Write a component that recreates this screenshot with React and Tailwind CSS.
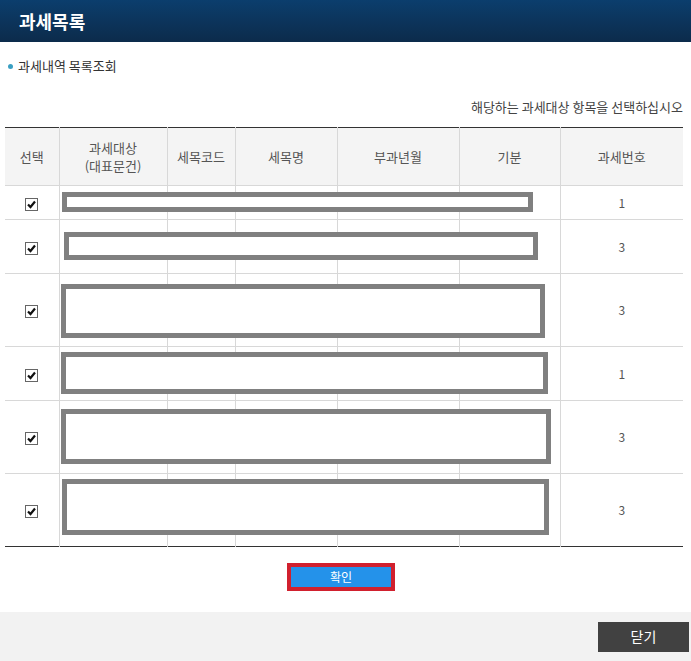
import React from "react";

const font = { fontFamily: '"Noto Sans CJK KR", "Noto Sans", sans-serif' };

const cols = [
  { w: "w-[54px]", label: "선택" },
  { w: "w-[108px]", label: ["과세대상", "(대표문건)"] },
  { w: "w-[68px]", label: "세목코드" },
  { w: "w-[102px]", label: "세목명" },
  { w: "w-[122px]", label: "부과년월" },
  { w: "w-[101px]", label: "기분" },
  { w: "w-[123px]", label: "과세번호" },
];

const rows = [
  { h: "h-[34px]", no: 1 },
  { h: "h-[54px]", no: 3 },
  { h: "h-[73px]", no: 3 },
  { h: "h-[54px]", no: 1 },
  { h: "h-[73px]", no: 3 },
  { h: "h-[73px]", no: 3 },
];

// redaction boxes drawn over the table
const masks = [
  "left-[57px] top-[65px] w-[471px] h-[20px]",
  "left-[59px] top-[105px] w-[474px] h-[28px]",
  "left-[56px] top-[157px] w-[484px] h-[54px]",
  "left-[56px] top-[225px] w-[487px] h-[42px]",
  "left-[56px] top-[282px] w-[490px] h-[55px]",
  "left-[57px] top-[352px] w-[487px] h-[56px]",
];

function Check() {
  return (
    <span className="inline-flex w-[13px] h-[13px] border border-[#666] bg-white items-center justify-center align-middle">
      <svg width="11" height="11" viewBox="0 0 11 11">
        <path d="M2 5.5 L4.5 8 L9 2.5" fill="none" stroke="#111" strokeWidth="2.2" />
      </svg>
    </span>
  );
}

export default function App() {
  return (
    <div className="w-[691px] h-[661px] bg-white flex flex-col" style={font}>
      <header className="h-[42px] bg-gradient-to-b from-[#0b3e6d] to-[#0c2b4b] flex items-center pl-[19px]">
        <h1 className="text-white text-[18px] font-bold leading-none">과세목록</h1>
      </header>

      <div className="flex items-center gap-[5px] pl-[8px] mt-[15px] h-[18px]">
        <span className="w-[5px] h-[5px] rounded-full bg-[#3a9fc2]" />
        <span className="text-[13px] text-[#333]">과세내역 목록조회</span>
      </div>

      <div className="text-right text-[13px] text-[#444] pr-[8px] mt-[23px] h-[18px] leading-[18px]">
        해당하는 과세대상 항목을 선택하십시오
      </div>

      <div className="relative ml-[5px] mt-[11px] w-[678px]">
        <table className="border-collapse table-fixed w-[678px] text-[13px] text-[#555]">
          <thead>
            <tr className="h-[58px] bg-[#f4f4f4] border-t border-t-[#333]">
              {cols.map((c, i) => (
                <th
                  key={i}
                  className={`${c.w} font-normal text-center leading-[18px] ${i > 0 ? "border-l border-l-[#d8d8d8]" : ""}`}
                >
                  {Array.isArray(c.label) ? (
                    <>
                      {c.label[0]}
                      <br />
                      {c.label[1]}
                    </>
                  ) : (
                    c.label
                  )}
                </th>
              ))}
            </tr>
          </thead>
          <tbody>
            {rows.map((r, i) => (
              <tr
                key={i}
                className={`${r.h} border-t border-t-[#d8d8d8] ${i === rows.length - 1 ? "border-b border-b-[#333]" : ""}`}
              >
                <td className="text-center">
                  <Check />
                </td>
                <td className="border-l border-l-[#d8d8d8]" />
                <td className="border-l border-l-[#d8d8d8]" />
                <td className="border-l border-l-[#d8d8d8]" />
                <td className="border-l border-l-[#d8d8d8]" />
                <td className="border-l border-l-[#d8d8d8]" />
                <td className="border-l border-l-[#d8d8d8] text-center text-[12px] text-[#555]">{r.no}</td>
              </tr>
            ))}
          </tbody>
        </table>
        {masks.map((m, i) => (
          <div key={i} className={`absolute ${m} border-[5px] border-[#808080] bg-white`} />
        ))}
      </div>

      <div className="pl-[287px] mt-[16px]">
        <button className="w-[108px] h-[28px] border-[4px] border-[#d1202e] bg-[#2492ea] text-white text-[12px] leading-none">
          확인
        </button>
      </div>

      <footer className="mt-auto h-[49px] bg-[#f2f2f2] flex items-center justify-end pr-[2px]">
        <button className="w-[91px] h-[30px] bg-[#414141] text-white text-[14px]">닫기</button>
      </footer>
    </div>
  );
}
